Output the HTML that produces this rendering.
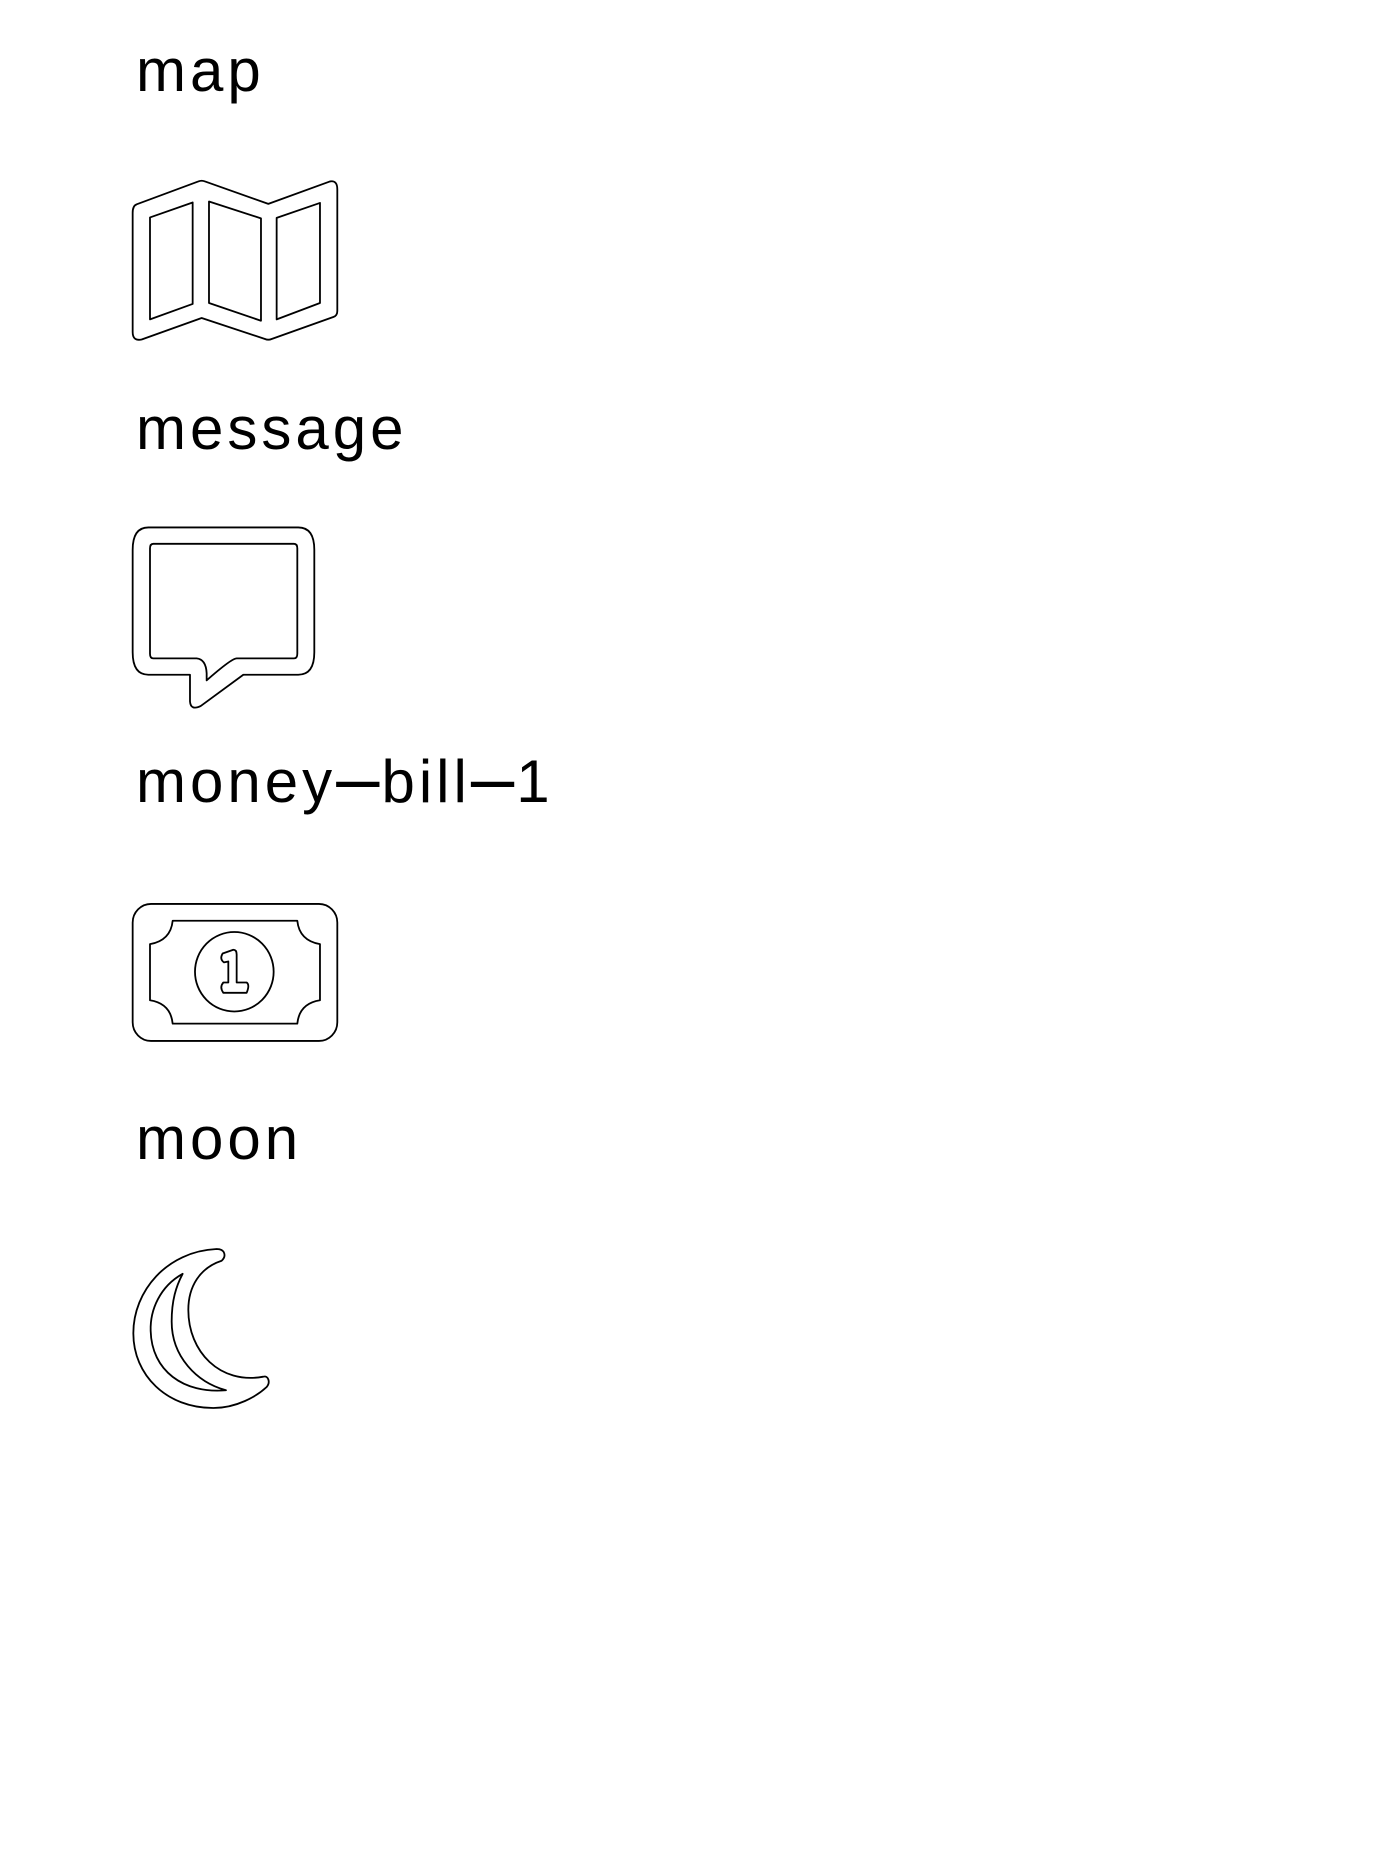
<!DOCTYPE html>
<html><head><meta charset="utf-8"><style>
html,body{margin:0;padding:0;background:#fff;width:1397px;height:1865px;overflow:hidden;position:relative}
.t{position:absolute;left:136px;font-family:"Liberation Sans",sans-serif;font-size:60px;letter-spacing:4px;color:#000;line-height:1;white-space:nowrap}
.d{font-size:78px;line-height:0;vertical-align:-2px;letter-spacing:2px}
svg{position:absolute;left:0;top:0}
path,rect,ellipse{vector-effect:non-scaling-stroke}
</style></head><body>
<div class="t" style="top:41px">map</div>
<div class="t" style="top:399px">message</div>
<div class="t" style="top:752px">money<span class="d">–</span>bill<span class="d">–</span>1</div>
<div class="t" style="top:1109px">moon</div>
<svg width="1397" height="1865" viewBox="0 0 1397 1865" fill="none" stroke="#000" stroke-linejoin="round" stroke-width="1.8">
<g transform="translate(100,0) scale(0.3333,0.4676)">
<path d="M110 437 L295 388 Q305 385 315 388 L505 436 L690 388 Q712 385 712 405 L712 665 Q712 675 700 678 L515 725 Q505 728 495 725 L305 680 L125 726 Q98 730 98 710 L98 455 Q98 440 110 437 Z"/>
<path d="M150 465 L278 433 L278 650 L150 683 Z"/>
<path d="M327 431 L483 467 L483 686 L327 648 Z"/>
<path d="M530 466 L660 434 L660 648 L530 683 Z"/>
<path d="M145 1128 L595 1128 Q643 1128 643 1176 L643 1395 Q643 1443 595 1443 L430 1443 L302 1510 Q272 1520 270 1500 L270 1443 L145 1443 Q98 1443 98 1395 L98 1176 Q98 1128 145 1128 Z"/>
<path d="M160 1163 L582 1163 Q592 1163 592 1173 L592 1398 Q592 1408 582 1408 L410 1408 Q395 1408 320 1455 L320 1440 Q318 1410 290 1408 L160 1408 Q150 1408 150 1398 L150 1173 Q150 1163 160 1163 Z"/>
</g>
<g transform="translate(100,730) scale(0.3333,0.4676)">
<rect x="98" y="372" width="614" height="293" rx="55" ry="40"/>
<path d="M218 408 L592 408 Q598 450 660 458 L660 578 Q598 585 592 628 L218 628 Q212 585 150 578 L150 458 Q212 450 218 408 Z"/>
<ellipse cx="403" cy="517" rx="118" ry="85"/>
<path d="M368 478 L400 470 Q410 470 410 480 L410 540 L440 540 Q450 545 440 562 L370 562 Q358 550 370 540 L385 540 L385 495 L372 497 Q358 490 368 478 Z"/>
<path d="M350 1110 C200 1115 100 1200 100 1290 C100 1380 200 1450 340 1450 C410 1450 470 1425 500 1405 C512 1395 505 1380 490 1383 C360 1400 265 1330 265 1240 C265 1190 300 1150 365 1135 C380 1125 375 1110 350 1110 Z"/>
<path d="M248 1163 C180 1190 150 1240 152 1285 C155 1370 250 1420 378 1412 C290 1395 215 1340 215 1265 C215 1220 228 1190 248 1163 Z"/>
</g>
</svg>
</body></html>
